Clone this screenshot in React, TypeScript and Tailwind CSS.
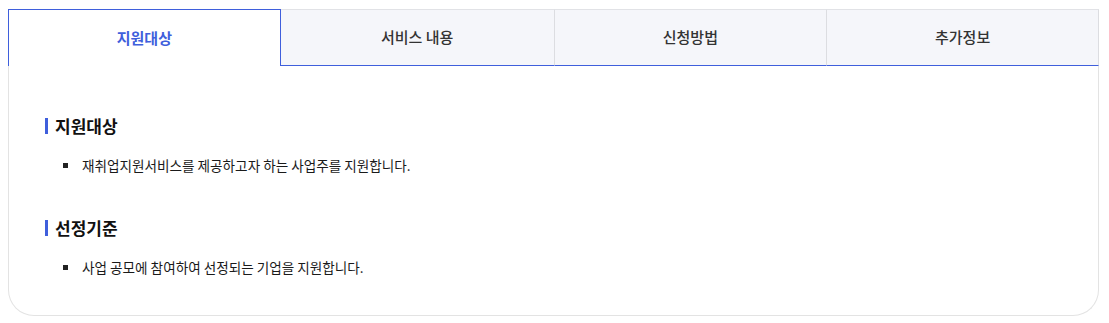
import React, { useState } from "react";

const TABS = ["지원대상", "서비스 내용", "신청방법", "추가정보"];

const SECTIONS = [
	{ title: "지원대상", items: ["재취업지원서비스를 제공하고자 하는 사업주를 지원합니다."] },
	{ title: "선정기준", items: ["사업 공모에 참여하여 선정되는 기업을 지원합니다."] }
];

export default function App() {
	const [active, setActive] = useState(0);

	return (
		<div
			className="bg-white pl-[8px] pr-[10px] pt-[9px] w-[1109px] h-[323px]"
			style={{ fontFamily: '"Noto Sans CJK KR", "Noto Sans", sans-serif' }}>
			{/* Tabs */}
			<div className="grid grid-cols-4">
				{TABS.map((tab, i) => {
					const isActive = i === active;
					return (
						<button
							key={tab}
							onClick={() => setActive(i)}
							className={
								isActive
									? "h-[57px] bg-white border-t border-l border-r border-[#3f5fdc] text-[15px] font-bold text-[#3f5fdc]"
									: `h-[57px] bg-[#f5f6fa] border-t border-[#e1e2e6] border-b border-b-[#3f5fdc] text-[15px] font-medium text-[#333] ${
											i === TABS.length - 1 ? "border-r border-r-[#dcdde1]" : ""
									  } ${i > 0 && i - 1 !== active ? "border-l border-l-[#dcdde1]" : ""}`
							}>
							{tab}
						</button>
					);
				})}
			</div>

			{/* Content */}
			<div className="border-l border-r border-b border-[#e3e3e3] rounded-b-[26px] h-[250px] pt-[48px] pl-[36px]">
				{SECTIONS.map((section, si) => (
					<div key={section.title} className={si > 0 ? "mt-[41px]" : ""}>
						<h3 className="flex items-center h-[24px] text-[17px] font-bold text-[#111]">
							<span className="w-[3px] h-[16px] bg-[#3f5fdc] mr-[7px]"></span>
							{section.title}
						</h3>
						<ul className="mt-[17px] pl-[18px]">
							{section.items.map((item) => (
								<li key={item} className="flex items-center h-[20px] text-[13.6px] text-[#1a1a1a]">
									<span className="w-[5px] h-[5px] bg-[#222] mr-[14px]"></span>
									{item}
								</li>
							))}
						</ul>
					</div>
				))}
			</div>
		</div>
	);
}
